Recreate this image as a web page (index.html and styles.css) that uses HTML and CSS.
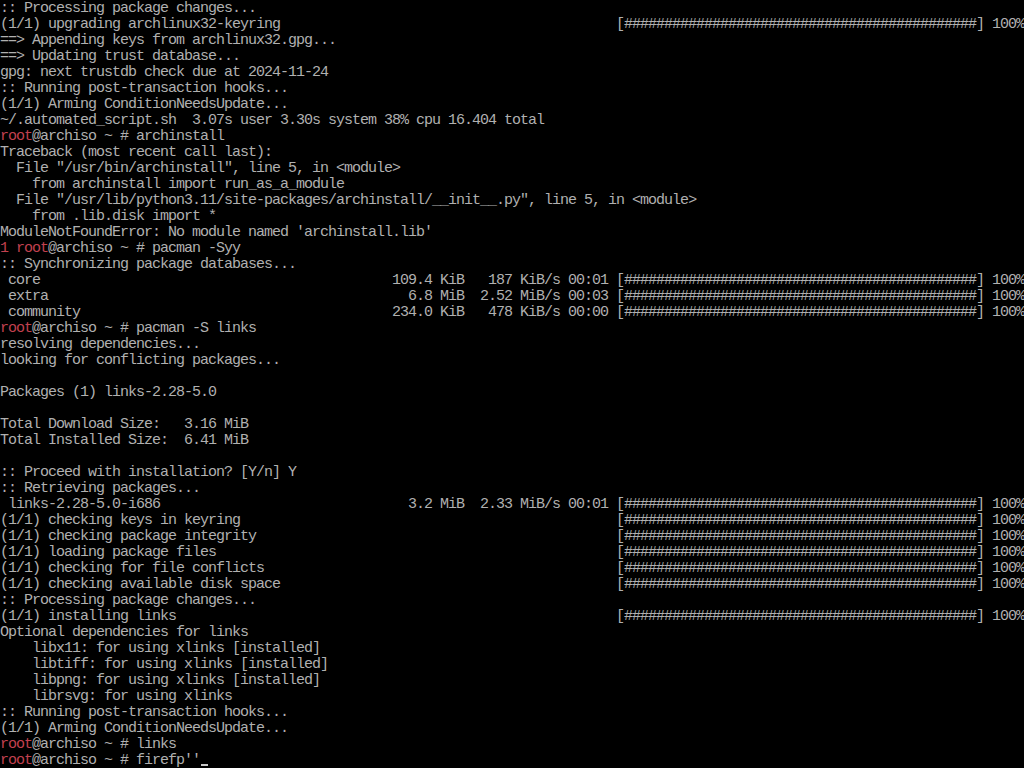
FILE: index.html
```html
<!DOCTYPE html>
<html>
<head>
<meta charset="utf-8">
<link rel="stylesheet" href="styles.css">
</head>
<body>
<div class="term">
<div class="ln">:: Processing package changes...</div>
<div class="ln"><span class="lead">(1/1) upgrading archlinux32-keyring</span><span class="bar">[############################################] 100%</span></div>
<div class="ln">==&gt; Appending keys from archlinux32.gpg...</div>
<div class="ln">==&gt; Updating trust database...</div>
<div class="ln">gpg: next trustdb check due at 2024-11-24</div>
<div class="ln">:: Running post-transaction hooks...</div>
<div class="ln">(1/1) Arming ConditionNeedsUpdate...</div>
<div class="ln">~/.automated_script.sh  3.07s user 3.30s system 38% cpu 16.404 total</div>
<div class="ln"><span class="r">root</span>@archiso ~ # archinstall</div>
<div class="ln">Traceback (most recent call last):</div>
<div class="ln">  File "/usr/bin/archinstall", line 5, in &lt;module&gt;</div>
<div class="ln">    from archinstall import run_as_a_module</div>
<div class="ln">  File "/usr/lib/python3.11/site-packages/archinstall/__init__.py", line 5, in &lt;module&gt;</div>
<div class="ln">    from .lib.disk import *</div>
<div class="ln">ModuleNotFoundError: No module named 'archinstall.lib'</div>
<div class="ln"><span class="r">1 root</span>@archiso ~ # pacman -Syy</div>
<div class="ln">:: Synchronizing package databases...</div>
<div class="ln"><span class="lead"><span class="name"> core</span>109.4 KiB   187 KiB/s 00:01 </span><span class="bar">[############################################] 100%</span></div>
<div class="ln"><span class="lead"><span class="name"> extra</span>  6.8 MiB  2.52 MiB/s 00:03 </span><span class="bar">[############################################] 100%</span></div>
<div class="ln"><span class="lead"><span class="name"> community</span>234.0 KiB   478 KiB/s 00:00 </span><span class="bar">[############################################] 100%</span></div>
<div class="ln"><span class="r">root</span>@archiso ~ # pacman -S links</div>
<div class="ln">resolving dependencies...</div>
<div class="ln">looking for conflicting packages...</div>
<div class="ln"></div>
<div class="ln">Packages (1) links-2.28-5.0</div>
<div class="ln"></div>
<div class="ln">Total Download Size:   3.16 MiB</div>
<div class="ln">Total Installed Size:  6.41 MiB</div>
<div class="ln"></div>
<div class="ln">:: Proceed with installation? [Y/n] Y</div>
<div class="ln">:: Retrieving packages...</div>
<div class="ln"><span class="lead"><span class="name"> links-2.28-5.0-i686</span>  3.2 MiB  2.33 MiB/s 00:01 </span><span class="bar">[############################################] 100%</span></div>
<div class="ln"><span class="lead">(1/1) checking keys in keyring</span><span class="bar">[############################################] 100%</span></div>
<div class="ln"><span class="lead">(1/1) checking package integrity</span><span class="bar">[############################################] 100%</span></div>
<div class="ln"><span class="lead">(1/1) loading package files</span><span class="bar">[############################################] 100%</span></div>
<div class="ln"><span class="lead">(1/1) checking for file conflicts</span><span class="bar">[############################################] 100%</span></div>
<div class="ln"><span class="lead">(1/1) checking available disk space</span><span class="bar">[############################################] 100%</span></div>
<div class="ln">:: Processing package changes...</div>
<div class="ln"><span class="lead">(1/1) installing links</span><span class="bar">[############################################] 100%</span></div>
<div class="ln">Optional dependencies for links</div>
<div class="ln">    libx11: for using xlinks [installed]</div>
<div class="ln">    libtiff: for using xlinks [installed]</div>
<div class="ln">    libpng: for using xlinks [installed]</div>
<div class="ln">    librsvg: for using xlinks</div>
<div class="ln">:: Running post-transaction hooks...</div>
<div class="ln">(1/1) Arming ConditionNeedsUpdate...</div>
<div class="ln"><span class="r">root</span>@archiso ~ # links</div>
<div class="ln"><span class="r">root</span>@archiso ~ # firefp''<span class="cursor"></span></div>
</div>
</body>
</html>
```
FILE: styles.css
```css
html, body {
  margin: 0;
  padding: 0;
  background: #000;
  width: 1024px;
  height: 768px;
  overflow: hidden;
}
.term {
  width: 1024px;
  height: 768px;
  overflow: hidden;
  font-family: "Liberation Mono", "DejaVu Sans Mono", monospace;
  font-size: 15px;
  letter-spacing: -1px;
  color: #b0b0b0;
}
.ln {
  box-sizing: border-box;
  height: 16px;
  padding-top: 1px;
  line-height: 16px;
  white-space: pre;
}
.lead {
  display: inline-block;
  width: 616px;
  vertical-align: top;
  white-space: pre;
}
.name {
  display: inline-block;
  width: 392px;
  vertical-align: top;
  white-space: pre;
}
.bar {
  white-space: pre;
}
.r {
  color: #c2414f;
}
.cursor {
  display: inline-block;
  width: 7px;
  height: 2px;
  margin-top: 11px;
  margin-left: 1px;
  background: #c8c8c8;
  vertical-align: top;
}
```
